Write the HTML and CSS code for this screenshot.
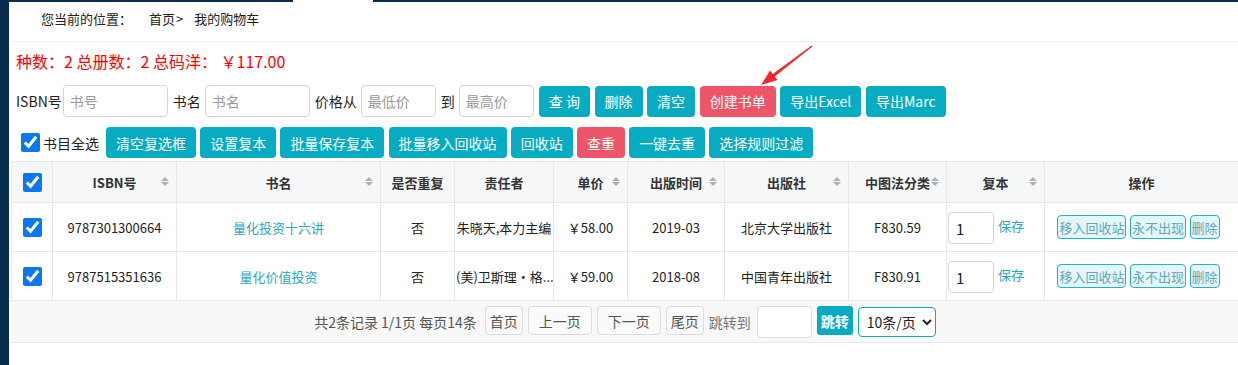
FILE: index.html
```html
<!DOCTYPE html>
<html lang="zh-CN">
<head>
<meta charset="utf-8">
<title>我的购物车</title>
<link rel="stylesheet" href="styles.css">
</head>
<body>
<div class="topbar"><span class="topbar-left"></span><span class="topbar-gap"></span><span class="topbar-right"></span></div>
<div class="layout">
  <aside class="sidebar"></aside>
  <main class="main">
    <div class="crumb">
      <span class="crumb-label">您当前的位置：</span><a class="crumb-link">首页</a><span class="crumb-sep">&gt;</span><a class="crumb-link crumb-current">我的购物车</a>
    </div>
    <div class="summary">种数：2 总册数：2 总码洋：&nbsp;￥117.00</div>
    <div class="search">
      <label class="s-label">ISBN号</label><input class="s-input w-wide" placeholder="书号">
      <label class="s-label">书名</label><input class="s-input w-wide" placeholder="书名">
      <label class="s-label">价格从</label><input class="s-input w-narrow" placeholder="最低价">
      <label class="s-label">到</label><input class="s-input w-narrow" placeholder="最高价">
      <div class="btn-group">
        <button class="btn btn-teal">查 询</button>
        <button class="btn btn-teal">删除</button>
        <button class="btn btn-teal">清空</button>
        <button class="btn btn-red">创建书单</button>
        <button class="btn btn-teal">导出Excel</button>
        <button class="btn btn-teal">导出Marc</button>
      </div>
    </div>
    <div class="toolbar">
      <label class="check-all"><input type="checkbox" class="cb" checked><span>书目全选</span></label>
      <div class="btn-group tight">
        <button class="btn btn-teal">清空复选框</button>
        <button class="btn btn-teal">设置复本</button>
        <button class="btn btn-teal">批量保存复本</button>
        <button class="btn btn-teal">批量移入回收站</button>
        <button class="btn btn-teal">回收站</button>
        <button class="btn btn-red">查重</button>
        <button class="btn btn-teal">一键去重</button>
        <button class="btn btn-teal">选择规则过滤</button>
      </div>
    </div>
    <table class="grid">
      <colgroup>
        <col class="c-check"><col class="c-isbn"><col class="c-title"><col class="c-dup"><col class="c-author"><col class="c-price"><col class="c-date"><col class="c-pub"><col class="c-clc"><col class="c-copy"><col class="c-op">
      </colgroup>
      <thead>
        <tr>
          <th><input type="checkbox" class="cb" checked></th>
          <th class="sortable">ISBN号<span class="sort"></span></th>
          <th class="sortable">书名<span class="sort"></span></th>
          <th>是否重复</th>
          <th>责任者</th>
          <th class="sortable">单价<span class="sort"></span></th>
          <th class="sortable">出版时间<span class="sort"></span></th>
          <th class="sortable">出版社<span class="sort"></span></th>
          <th class="sortable">中图法分类<span class="sort"></span></th>
          <th class="sortable">复本<span class="sort"></span></th>
          <th class="last">操作</th>
        </tr>
      </thead>
      <tbody>
        <tr>
          <td><input type="checkbox" class="cb" checked></td>
          <td>9787301300664</td>
          <td><a class="title-link">量化投资十六讲</a></td>
          <td>否</td>
          <td class="author">朱晓天,本力主编</td>
          <td>￥58.00</td>
          <td>2019-03</td>
          <td>北京大学出版社</td>
          <td>F830.59</td>
          <td class="copy"><div class="copy-box"><input class="copy-input" value="1"><a class="save">保存</a></div></td>
          <td class="last"><div class="ops"><button class="op">移入回收站</button><button class="op">永不出现</button><button class="op">删除</button></div></td>
        </tr>
        <tr>
          <td><input type="checkbox" class="cb" checked></td>
          <td>9787515351636</td>
          <td><a class="title-link">量化价值投资</a></td>
          <td>否</td>
          <td class="author">(美)卫斯理·格...</td>
          <td>￥59.00</td>
          <td>2018-08</td>
          <td>中国青年出版社</td>
          <td>F830.91</td>
          <td class="copy"><div class="copy-box"><input class="copy-input" value="1"><a class="save">保存</a></div></td>
          <td class="last"><div class="ops"><button class="op">移入回收站</button><button class="op">永不出现</button><button class="op">删除</button></div></td>
        </tr>
      </tbody>
    </table>
    <div class="pager">
      <span class="pg-info">共2条记录 1/1页 每页14条</span>
      <button class="pg-btn pg-short">首页</button>
      <button class="pg-btn">上一页</button>
      <button class="pg-btn">下一页</button>
      <button class="pg-btn pg-short">尾页</button>
      <span class="pg-jump-label">跳转到</span>
      <input class="pg-input">
      <button class="pg-go">跳转</button>
      <select class="pg-size"><option>10条/页</option><option>20条/页</option></select>
    </div>
  </main>
</div>
<svg class="arrow" width="65" height="52" viewBox="0 0 65 52" aria-hidden="true">
  <polygon points="57.4,6.5 19.7,36.4 22.4,40 6,45 15.1,30.4 17.8,34 56.6,5.5" fill="#f2262b"/>
</svg>
</body>
</html>
```
FILE: styles.css
```css
* { box-sizing: border-box; }

body {
  margin: 0;
  font-family: "Noto Sans CJK SC", "Microsoft YaHei", "Liberation Sans", sans-serif;
  font-size: 14px;
  color: #333;
  background: #fff;
  position: relative;
}

.topbar { display: flex; height: 2px; }
.topbar-left { width: 293px; background: #082c4e; }
.topbar-gap { width: 80px; background: #fff; }
.topbar-right { flex: 1; background: #082c4e; }

.layout { display: flex; height: 363px; }
.sidebar { width: 9px; background: #082c4e; flex: none; }
.main { flex: 1; min-width: 0; padding-left: 2px; }

/* breadcrumb */
.crumb {
  height: 40px;
  border-bottom: 1px solid #eee;
  padding-left: 30px;
  font-size: 13px;
  line-height: 34px;
  color: #222;
  white-space: nowrap;
}
.crumb-label { margin-right: 17px; }
.crumb-sep { margin-right: 11px; margin-left: 1px; }
.crumb-link { color: #222; text-decoration: none; }

.summary {
  height: 38px;
  line-height: 38px;
  padding-left: 5px;
  color: #ff0000;
  font-size: 16px;
  white-space: nowrap;
}

/* search row */
.search {
  display: flex;
  align-items: center;
  height: 32px;
  margin-top: 5px;
  padding-left: 5px;
}
.s-label { margin-right: 4px; font-size: 14px; color: #222; white-space: nowrap; }
.s-label:first-child { margin-right: 1px; }
.s-input {
  height: 32px;
  border: 1px solid #d5d5d5;
  border-radius: 4px;
  padding: 0 6px;
  margin-right: 5px;
  font: inherit;
  font-size: 14px;
  color: #333;
}
.s-input::placeholder { color: #999; }
.w-wide { width: 105px; }
.w-narrow { width: 75px; }

.btn-group { display: flex; gap: 4.6px; }
.btn-group.tight { gap: 4.2px; }
.btn {
  height: 31px;
  padding: 0 10px;
  border: none;
  border-radius: 4px;
  font: inherit;
  font-size: 14px;
  color: #fff;
  white-space: nowrap;
  cursor: pointer;
}
.btn-teal { background: #07acc3; }
.btn-red { background: #ee5568; }

/* toolbar */
.toolbar {
  display: flex;
  align-items: center;
  height: 31px;
  margin-top: 10px;
  padding-left: 10px;
}
.check-all { display: flex; align-items: center; margin-right: 7px; color: #222; }
.check-all span { margin-left: 3px; }
.cb { width: 19px; height: 19px; margin: 0; accent-color: #0a78f5; vertical-align: middle; }

/* table */
.grid {
  width: 100%;
  margin-top: 3px;
  border-collapse: collapse;
  table-layout: fixed;
  font-size: 13px;
}
.c-check { width: 41px; }
.c-isbn { width: 124px; }
.c-title { width: 204px; }
.c-dup { width: 74px; }
.c-author { width: 99px; }
.c-price { width: 74px; }
.c-date { width: 97px; }
.c-pub { width: 124px; }
.c-clc { width: 98px; }
.c-copy { width: 98px; }
.c-op { width: auto; }

.grid th, .grid td {
  border: 1px solid #e6e8eb;
  text-align: center;
  padding: 0;
  white-space: nowrap;
  overflow: hidden;
}
.grid .last { border-right: none; }
.grid thead tr { height: 41px; }
.grid th { background: #f6f7f8; font-weight: bold; color: #333; position: relative; }
.grid tbody tr { height: 49px; }
.grid td { color: #222; }
.grid td.author { padding: 0 1px; }

.sort {
  position: absolute;
  right: 7px;
  top: 50%;
  width: 8px;
  height: 9px;
  margin-top: -5px;
}
.sort::before, .sort::after {
  content: "";
  position: absolute;
  left: 0;
  border-left: 4px solid transparent;
  border-right: 4px solid transparent;
}
.sort::before { top: 0; border-bottom: 4px solid #b0b0b0; }
.sort::after { bottom: 0; border-top: 4px solid #b0b0b0; }

.title-link { color: #2ba6bd; text-decoration: none; }

.grid td.copy { text-align: left; padding-left: 1px; }
.copy-box { display: flex; align-items: center; }
.copy-input {
  width: 46px;
  height: 32px;
  border: 1px solid #d5d5d5;
  border-radius: 4px;
  padding: 0 7px;
  font: inherit;
  font-size: 15px;
  color: #222;
  margin-top: 2px;
}
.save { margin-left: 4px; margin-bottom: 3px; color: #2ba6bd; font-size: 13px; }

.ops { display: flex; justify-content: center; gap: 3.5px; padding-right: 6px; }
.op {
  height: 24px;
  padding: 0 1px;
  border: 1px solid #20b2c9;
  border-radius: 4px;
  background: #e3f6fa;
  color: #62a7b4;
  font: inherit;
  font-size: 13px;
  white-space: nowrap;
}

/* pager */
.pager {
  height: 42px;
  background: #f8f8f8;
  border-bottom: 1px solid #e6e8eb;
  display: flex;
  justify-content: center;
  align-items: center;
  gap: 5px;
  font-size: 14px;
  color: #555;
  padding-left: 1px;
}
.pg-info { margin-right: 3px; white-space: nowrap; }
.pg-btn {
  height: 29px;
  padding: 0 10px;
  border: 1px solid #dcdcdc;
  border-radius: 4px;
  background: #fafafa;
  color: #555;
  font: inherit;
  font-size: 14px;
  margin-top: -2px;
}
.pg-btn.pg-short { padding: 0 4px; }
.pg-jump-label { color: #777; margin-right: 1px; }
.pg-input {
  width: 55px;
  height: 32px;
  border: 1px solid #dcdcdc;
  border-radius: 4px;
  background: #fff;
}
.pg-go {
  height: 29px;
  padding: 0 4px;
  border: none;
  border-radius: 3px;
  background: #07acc3;
  color: #fff;
  font: inherit;
  font-size: 14px;
  font-weight: bold;
  margin-top: -2px;
}
.pg-size {
  width: 78px;
  height: 30px;
  border: 1px solid #07acc3;
  border-radius: 4px;
  background: #fff;
  color: #222;
  font: inherit;
  font-size: 14px;
  padding-left: 4px;
}

.arrow {
  position: absolute;
  left: 755px;
  top: 40px;
  pointer-events: none;
}
```
